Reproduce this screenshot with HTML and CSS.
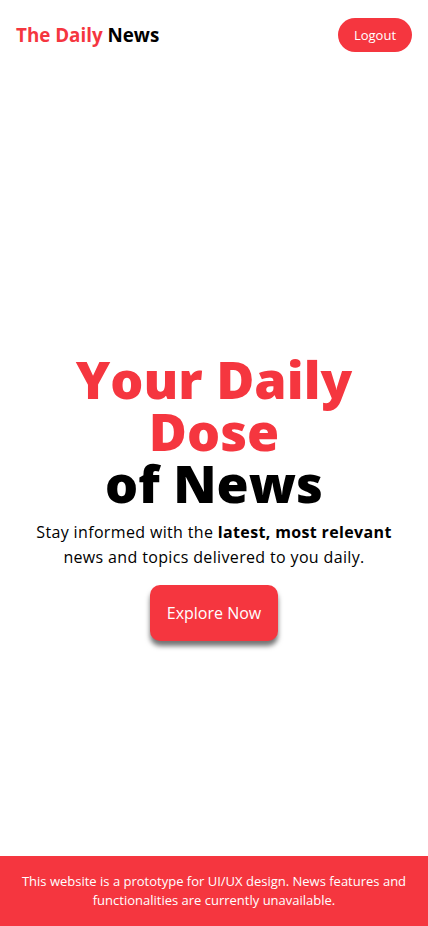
FILE: index.html
```html
<!DOCTYPE html>
<html lang="en">
<head>
<meta charset="utf-8">
<meta name="viewport" content="width=device-width, initial-scale=1">
<title>The Daily News</title>
<link rel="stylesheet" href="styles.css">
</head>
<body>
<div class="page">
  <header class="topbar">
    <div class="logo"><span class="logo-red">The Daily</span> News</div>
    <button class="logout">Logout</button>
  </header>
  <main class="hero">
    <h1 class="title"><span class="title-red">Your Daily<br>Dose</span><br>of News</h1>
    <p class="lead">Stay informed with the <strong>latest, most relevant</strong> news and topics delivered to you daily.</p>
    <button class="cta">Explore Now</button>
  </main>
  <footer class="footer">
    <p>This website is a prototype for UI/UX design. News features and functionalities are currently unavailable.</p>
  </footer>
</div>
</body>
</html>
```
FILE: styles.css
```css
* { box-sizing: border-box; }
html, body { margin: 0; padding: 0; background: #fff; }
body { font-family: "Open Sans", "Noto Sans", sans-serif; color: #000; }
.page { min-height: 926px; display: flex; flex-direction: column; }
.topbar {
  height: 70px;
  display: flex;
  align-items: center;
  justify-content: space-between;
  padding: 0 16px;
}
.logo { font-size: 18.8px; font-weight: 700; letter-spacing: 0; }
.logo-red { color: #f5363f; }
.logout {
  font-family: inherit;
  background: #f5363f;
  color: #fff;
  border: 0;
  border-radius: 17px;
  width: 74px;
  height: 34px;
  font-size: 13px;
  padding: 0;
}
.hero {
  flex: 1;
  display: flex;
  flex-direction: column;
  align-items: center;
  justify-content: center;
  text-align: center;
  padding: 68px 12px 0;
}
.title {
  margin: 0;
  font-size: 52px;
  line-height: 52px;
  font-weight: 800;
  letter-spacing: 0;
}
.title-red { color: #f5363f; }
.lead {
  margin: 11px 0 15px;
  font-size: 16px;
  line-height: 25px;
  letter-spacing: 0.35px;
  max-width: 390px;
}
.lead strong { font-weight: 700; }
.cta {
  font-family: inherit;
  background: #f5363f;
  color: #fff;
  border: 0;
  border-radius: 10px;
  width: 128px;
  height: 56px;
  font-size: 16px;
  box-shadow: 0 5px 5px rgba(0,0,0,0.55);
}
.footer {
  background: #f5363f;
  height: 70px;
  display: flex;
  align-items: center;
  justify-content: center;
  padding: 0 16px;
}
.footer p {
  margin: 0;
  color: #fff;
  font-size: 13px;
  line-height: 19.5px;
  text-align: center;
}
```
